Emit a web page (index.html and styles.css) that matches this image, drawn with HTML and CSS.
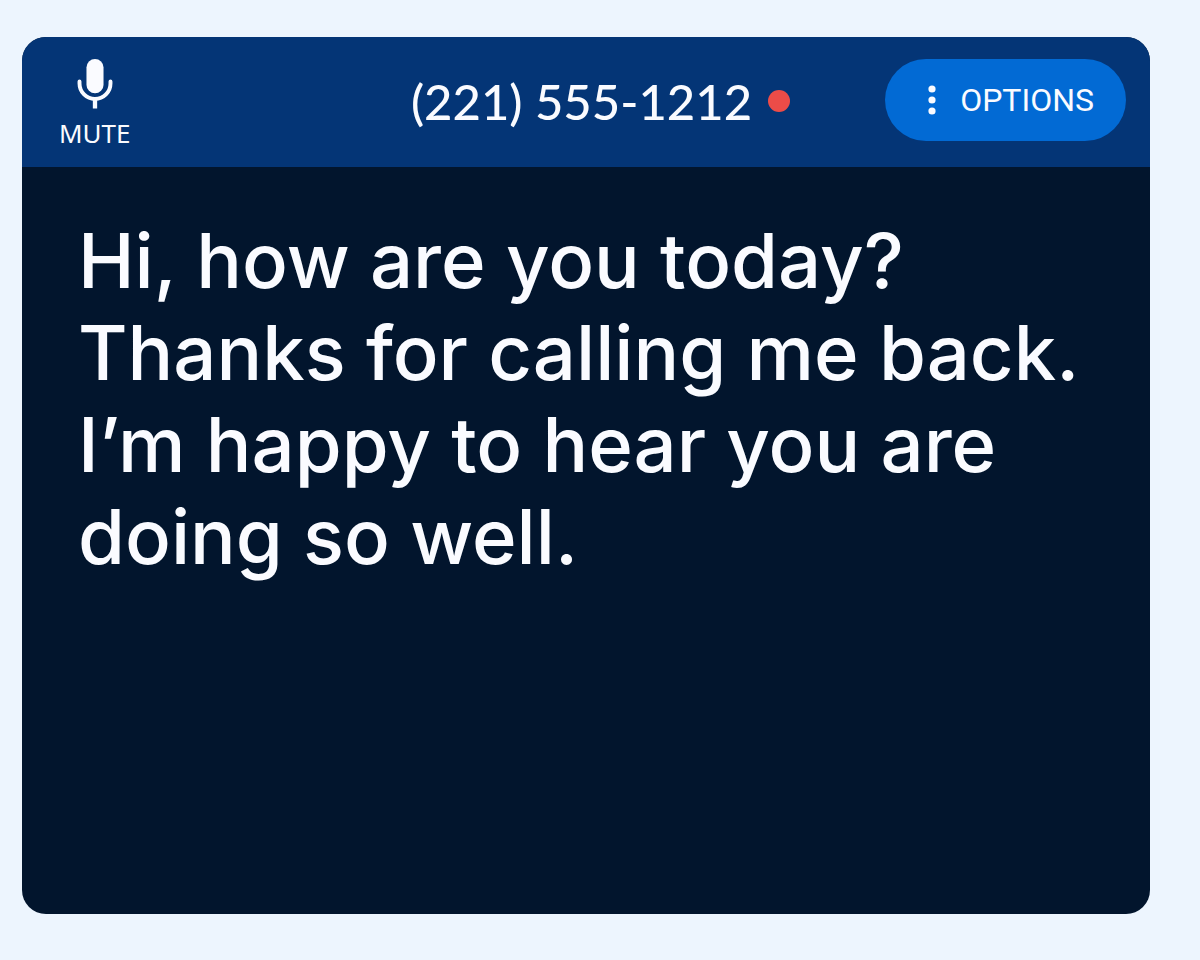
FILE: index.html
```html
<!DOCTYPE html>
<html lang="en">
<head>
  <meta charset="UTF-8" />
  <meta name="viewport" content="width=device-width, initial-scale=1.0" />
  <title>Call captions</title>
  <link rel="stylesheet" href="styles.css">
</head>

<body>
  <main class="call-card">
    <header class="call-header">
      <button class="mute-btn" type="button">
        <svg class="mic-icon" viewBox="0 0 36 51" aria-hidden="true">
          <rect x="9.3" y="0" width="17.4" height="35" rx="8.7" fill="currentColor" />
          <path d="M2.2 23v2a15.8 15.8 0 0 0 31.6 0v-2" fill="none" stroke="currentColor" stroke-width="4" stroke-linecap="round" />
          <path d="M18 41v9.5" stroke="currentColor" stroke-width="4.4" />
        </svg>
        MUTE
      </button>

      <h1 class="phone-number">(221) 555-1212 <span class="live-dot"></span></h1>

      <button class="options-btn" type="button">
        <svg class="dots-icon" viewBox="0 0 8 30" aria-hidden="true">
          <circle cx="4" cy="4" r="3.6" />
          <circle cx="4" cy="15" r="3.6" />
          <circle cx="4" cy="26" r="3.6" />
        </svg>
        OPTIONS
      </button>
    </header>

    <p class="caption">Hi, how are you today? <br>Thanks for calling me back. <br>I’m happy to hear you are <br>doing so well.</p>
  </main>
</body>
</html>
```

FILE: styles.css
```css
:root {
  --page: #edf5fe;
  --header-blue: #043576;
  --button-blue: #026ad4;
  --navy: #02152d;
  --red: #ec4c48;
  --white: #fafbff;
}

* {
  box-sizing: border-box;
}

body {
  margin: 0;
  min-height: 100vh;
  padding: 37px 50px 46px 22px;
  display: flex;
  background-color: var(--page);
  font-family: Lato, sans-serif;
  color: var(--white);
}

.call-card {
  flex: 1;
  background-color: var(--navy);
  border-radius: 24px;
  overflow: hidden;
}

.call-header {
  display: grid;
  grid-template-columns: 1fr auto 1fr;
  align-items: start;
  padding: 22px 24px 20px 37px;
  background-color: var(--header-blue);
}

button {
  border: none;
  padding: 0;
  color: inherit;
  cursor: pointer;
}

.mute-btn {
  justify-self: start;
  display: flex;
  flex-direction: column;
  align-items: center;
  gap: 10px;
  background: none;
  font-family: 'Noto Sans', sans-serif;
  font-size: 26px;
  line-height: 28px;
}

.mic-icon {
  width: 36px;
  height: 50px;
}

.phone-number {
  display: flex;
  align-items: center;
  gap: 16px;
  margin: 10px 0 0 16px;
  font-size: 49px;
  font-weight: 500;
  line-height: 64px;
}

.live-dot {
  width: 22px;
  height: 22px;
  border-radius: 50%;
  background-color: var(--red);
}

.options-btn {
  justify-self: end;
  display: flex;
  align-items: center;
  gap: 24px;
  height: 82px;
  padding: 0 32px 0 43px;
  border-radius: 41px;
  background-color: var(--button-blue);
  font-family: Roboto, sans-serif;
  font-size: 32px;
}

.dots-icon {
  width: 8px;
  height: 30px;
  fill: currentColor;
}

.caption {
  margin: 0;
  padding: 47px 56px;
  font-family: Inter, sans-serif;
  font-size: 76px;
  font-weight: 500;
  line-height: 92px;
}

@media (max-width: 900px) {
  .caption {
    padding: 32px 24px;
    font-size: 48px;
    line-height: 60px;
  }
}
```
